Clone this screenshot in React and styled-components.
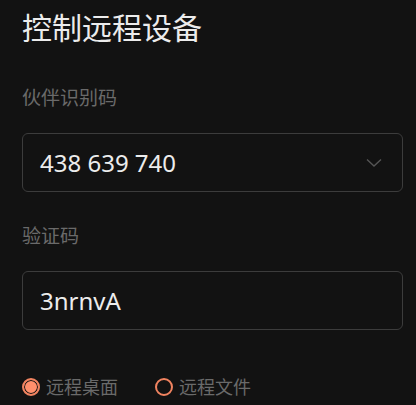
import styled, { createGlobalStyle } from 'styled-components';

const GlobalStyle = createGlobalStyle`
    html, body {
        margin: 0;
        padding: 0;
        background: #121212;
    }
    body {
        font-family: "Noto Sans", "Noto Sans CJK SC", sans-serif;
    }
`;

export default function App() {
    return (
        <>
            <GlobalStyle />
            <Container>
                <Title>控制远程设备</Title>
                <Label>伙伴识别码</Label>
                <Field>
                    <FieldValue>438 639 740</FieldValue>
                    <Chevron width="16" height="10" viewBox="0 0 16 10">
                        <path d="M1 1.5 L8 8 L15 1.5" fill="none" stroke="#555" strokeWidth="1.4" />
                    </Chevron>
                </Field>
                <Label>验证码</Label>
                <Field>
                    <FieldValue>3nrnvA</FieldValue>
                </Field>
                <RadioRow>
                    <RadioItem>
                        <RadioDot $checked />
                        <RadioText>远程桌面</RadioText>
                    </RadioItem>
                    <RadioItem>
                        <RadioDot />
                        <RadioText>远程文件</RadioText>
                    </RadioItem>
                </RadioRow>
            </Container>
        </>
    );
}

const Container = styled.div`
    display: flex;
    flex-direction: column;
    padding: 8px 13px 0 22px;
`;
const Title = styled.h1`
    font-size: 30px;
    font-weight: 400;
    line-height: 40px;
    color: #ececec;
    margin: 0 0 37px 0;
`;
const Label = styled.div`
    font-size: 19px;
    line-height: 26px;
    color: #6a6a6a;
    margin-bottom: 22px;
`;
const Field = styled.div`
    display: flex;
    align-items: center;
    justify-content: space-between;
    height: 57px;
    border: 1px solid #3c3c3c;
    border-radius: 6px;
    padding: 0 20px 0 17px;
    margin-bottom: 31px;
`;
const FieldValue = styled.span`
    font-size: 24px;
    color: #ececec;
`;
const Chevron = styled.svg`
    display: block;
`;
const RadioRow = styled.div`
    display: flex;
    gap: 37px;
    margin-top: 14px;
`;
const RadioItem = styled.div`
    display: flex;
    align-items: center;
    gap: 6px;
`;
const RadioDot = styled.span`
    box-sizing: border-box;
    width: 18px;
    height: 18px;
    border-radius: 50%;
    border: 2px solid #f08360;
    background: ${(p) => (p.$checked ? '#ff8f6c' : 'transparent')};
    box-shadow: ${(p) => (p.$checked ? 'inset 0 0 0 1px #121212' : 'none')};
`;
const RadioText = styled.span`
    font-size: 18px;
    line-height: 24px;
    color: #6a6a6a;
`;
